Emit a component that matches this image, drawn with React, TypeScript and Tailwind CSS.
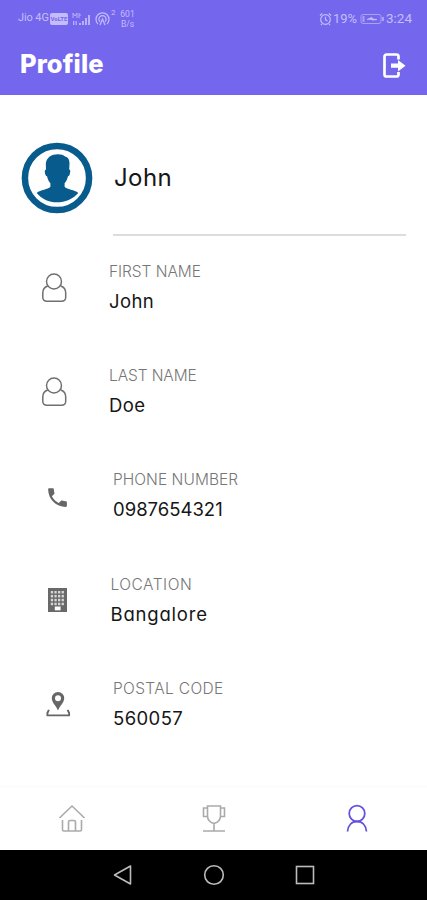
import type { ReactNode } from "react";

function PersonIcon() {
  return (
    <svg className="ml-[41px] mt-[17px] h-8 w-[27px] shrink-0" viewBox="0 0 27 32" fill="none" stroke="#707070" strokeWidth="1.5">
      <circle cx="13" cy="8.5" r="7.5" />
      <path d="M6.800 13C3.500 14 1.800 16.500 1.800 20v4.300c0 2.600 1.600 4 4.200 4h14.500c2.600 0 4.200-1.400 4.200-4V20c0-3.500-1.700-6-5-7" />
    </svg>
  );
}

function PhoneIcon() {
  return (
    <svg className="ml-[45px] mt-[21px] h-[25px] w-[25px] shrink-0" viewBox="0 0 24 24" fill="#666">
      <path d="M6.620 10.790c1.440 2.830 3.760 5.140 6.590 6.590l2.200-2.200c.27-.27.67-.36 1.020-.24 1.120.37 2.330.57 3.570.57.55 0 1 .45 1 1V20c0 .55-.45 1-1 1-9.390 0-17-7.610-17-17 0-.55.45-1 1-1h3.500c.55 0 1 .45 1 1 0 1.250.2 2.450.57 3.570.11.35.03.74-.25 1.020l-2.200 2.200z" />
    </svg>
  );
}

function BuildingIcon() {
  return (
    <svg className="ml-[47px] mt-[18px] h-[26px] w-[21px] shrink-0" viewBox="0 0 21 26">
      <path fill="#696969" d="M1 1h19v24H1z" />
      {[4, 7.9, 11.8, 15.7].map((y) => [3.800, 7.400, 11, 14.600].map((x) => (
        <rect key={`${x}-${y}`} x={x} y={y} width="2.300" height="2.500" fill="#d6d6d6" />
      )))}
      <path fill="#fff" d="M7.800 19.500h5.800V23.300H7.800z" />
    </svg>
  );
}

function PinIcon() {
  return (
    <svg className="ml-[45px] mt-[17px] h-7 w-[26px] shrink-0" viewBox="0 0 26 28">
      <path fill="#666" fillRule="evenodd" d="M13 2a6.200 6.200 0 0 0-6.200 6.200C6.800 12.500 11 15.500 13 20.500c2-5 6.200-8 6.200-12.300A6.200 6.200 0 0 0 13 2zm0 3.200a3 3 0 1 1 0 6 3 3 0 0 1 0-6z" />
      <path d="M3.900 19.800 2.400 23v2.400h21.700V23l-1.500-3.200" fill="none" stroke="#666" strokeWidth="1.900" strokeLinejoin="round" />
    </svg>
  );
}

type Field = { label: string; value: string; icon: ReactNode; pad: string; labelClass: string; valueClass: string };

const FIELDS: Field[] = [
  { label: "FIRST NAME", value: "John", icon: <PersonIcon />, pad: "pl-[41px]", labelClass: "tracking-[-0.05px]", valueClass: "tracking-[0.4px]" },
  { label: "LAST NAME", value: "Doe", icon: <PersonIcon />, pad: "pl-[41px]", labelClass: "tracking-[-0.1px]", valueClass: "tracking-[0.4px]" },
  { label: "PHONE NUMBER", value: "0987654321", icon: <PhoneIcon />, pad: "pl-[45px]", labelClass: "tracking-[0.05px]", valueClass: "tracking-[0px]" },
  { label: "LOCATION", value: "Bangalore", icon: <BuildingIcon />, pad: "pl-[42.500px]", labelClass: "tracking-[0.5px]", valueClass: "tracking-[0.8px]" },
  { label: "POSTAL CODE", value: "560057", icon: <PinIcon />, pad: "pl-[45px]", labelClass: "tracking-[0.35px]", valueClass: "tracking-[0.4px]" },
];

function StatusBar() {
  return (
    <div className="flex h-[37px] items-center whitespace-nowrap pl-[18px] pr-[15px] font-[Roboto] text-[#c5bdfb]">
      <span className="w-8 text-[11px] tracking-[-0.1px]">Jio 4G</span>
      <span className="flex h-[12px] w-[18px] items-center justify-center rounded-[2px] bg-[#c5bdfb] text-[6px] font-bold text-[#7467ee]">VoLTE</span>
      <svg className="ml-[3px] h-4 w-[21px]" viewBox="0 0 21 16" fill="#b9b0f8">
        <path d="M8 12h2v2H8zM11 10h2v4h-2zM14 7h2v7h-2zM17 4h2v10h-2zM2 10h1.300v4H2zM4.500 10h1.300v4H4.500z" />
        <path d="M2 7V2l2 3 2-3v5M8 2v5M8 4h2" fill="none" stroke="#b9b0f8" />
      </svg>
      <svg className="ml-[3px] h-4 w-[15px]" viewBox="0 0 15 16" fill="none" stroke="#c5bdfb" strokeWidth="1.200">
        <path d="M3 13a6.500 6.500 0 1 1 9 0M5 10.800a3.600 3.600 0 1 1 5 0M5 14l2.500-6 2.500 6" />
      </svg>
      <span className="mb-3 ml-px text-[8px]">2</span>
      <span className="ml-1 flex w-4 flex-col items-center text-[8.500px] leading-[10px]">
        <span>601</span>
        <span>B/s</span>
      </span>
      <svg className="ml-auto h-[14px] w-[13px]" viewBox="0 0 13 14" fill="none" stroke="#c5bdfb" strokeWidth="1.200">
        <circle cx="6.500" cy="7.500" r="4.800" />
        <path d="M6.500 4.800v3l2 1.200M1 3.500 3.200 1.500M12 3.500 9.800 1.500M3 12l-1 1M10 12l1 1" />
      </svg>
      <span className="ml-px w-[25px] text-[13px]">19%</span>
      <svg className="ml-[2px] h-3 w-[25px]" viewBox="0 0 25 12" fill="none" stroke="#aaa0f5">
        <rect x="1" y="1.500" width="20" height="9" rx="2" />
        <path d="M23 4v4M3.500 3v6" strokeWidth="2" />
        <path d="m7 6.500 5-2v1.500l5 .5-5 .5" fill="#c5bdfb" stroke="#c5bdfb" />
      </svg>
      <span className="ml-px text-[13.500px]">3:24</span>
    </div>
  );
}

function Header() {
  return (
    <header className="h-[95px] bg-[#7467ee]">
      <StatusBar />
      <div className="flex items-start justify-between pl-[20px] pr-[21px]">
        <h1 className="mt-[11px] text-[25.500px] font-extrabold leading-8 tracking-[0.1px] text-white">Profile</h1>
        <svg className="mt-[15px] h-7 w-6" viewBox="0 0 24 28" fill="none" stroke="#fff" strokeWidth="2.700">
          <path d="M16.500 7.500V4.500a2 2 0 0 0-2-2H4.500a2 2 0 0 0-2 2v18a2 2 0 0 0 2 2h10a2 2 0 0 0 2-2V20" />
          <path d="M9 11.600h7V8l7.500 5.700L16 19.500v-3.700H9z" fill="#fff" stroke="none" />
        </svg>
      </div>
    </header>
  );
}

function Avatar() {
  return (
    <svg className="mt-[47px] h-[72px] w-[72px] shrink-0" viewBox="0 0 72 72" fill="#075c8d">
      <circle cx="36" cy="36" r="32.100" fill="none" stroke="#075c8d" strokeWidth="6.500" />
      <path d="M37 12.200c-6.500 0-11.500 3-12.200 9.500l.2 6c-1.600 0-1.300 2.200-.8 4.400.4 1.500 1 2.200 1.800 2.200.8 3.500 2 5.500 3.400 7v3.500c-2.400 3-9.900 2.700-13.700 6.200C20.500 57 28 60.300 36 60.300s16.200-3.300 21.300-9.300c-3.800-3.500-11.300-3.200-13.700-6.200v-3.500c1.400-1.500 2.600-3.500 3.400-7 .8 0 1.400-.7 1.800-2.200.5-2.200 1-4.400-.6-4.400l.3-6.500c0-4.200-1.800-6-4.500-6.700-1.500-1.600-4-2.300-7-2.300z" />
    </svg>
  );
}

function FieldRow({ label, value, icon, pad, labelClass, valueClass }: Field) {
  return (
    <div className="flex h-[104.200px] items-start">
      <div className="w-[68px] shrink-0">{icon}</div>
      <div className={pad}>
        <p className={`mt-[6px] whitespace-nowrap text-[15.500px] font-light leading-5 text-[#777] ${labelClass}`}>{label}</p>
        <p className={`mt-[7px] whitespace-nowrap text-[18.500px] leading-6 text-[#161616] ${valueClass}`}>{value}</p>
      </div>
    </div>
  );
}

function TabBar() {
  return (
    <nav className="flex h-[64px] items-start border-t border-[#fafafa]">
      <div className="flex flex-1 justify-center pl-[2px] pt-[17px]">
        <svg className="h-[29px] w-7" viewBox="0 0 28 29" fill="none" stroke="#aaa" strokeWidth="1.600">
          <path d="M1.500 14 14 2l12.500 12M4.500 16v9.500c0 1 .5 1.500 1.500 1.500h16c1 0 1.500-.5 1.500-1.500V16M10.500 27v-9c0-1 .5-1.500 1.500-1.500h4c1 0 1.500.5 1.500 1.500v9" />
        </svg>
      </div>
      <div className="flex flex-1 justify-center pl-[2px] pt-[17px]">
        <svg className="h-[29px] w-6" viewBox="0 0 24 29" fill="none" stroke="#aaa" strokeWidth="1.600">
          <path d="M5.500 2h13v10c0 4-3 6.500-6.500 7.500-3.500-1-6.500-3.500-6.500-7.500zM5.500 4h-4v8.500h4M18.500 4h4v8.500h-4M12 19.500V27M1 27h22" />
        </svg>
      </div>
      <div className="flex flex-1 justify-center pl-[3px] pt-[17px]">
        <svg className="h-[29px] w-6" viewBox="0 0 24 29" fill="none" stroke="#6252df" strokeWidth="1.800">
          <circle cx="12" cy="9.500" r="7.800" />
          <path d="M2.500 27.500C3 21.500 6.500 17.500 12 17.500s9 4 9.500 10" />
        </svg>
      </div>
    </nav>
  );
}

function SystemNav() {
  return (
    <div className="flex h-[50px] items-center bg-black pl-[112px]">
      <svg className="h-[22px] w-[22px]" viewBox="0 0 22 22" fill="none" stroke="#bcbcbc" strokeWidth="1.600" strokeLinejoin="round">
        <path d="M18.500 2v18L2.500 11z" />
      </svg>
      <svg className="ml-[69px] h-[22px] w-[22px]" viewBox="0 0 22 22" fill="none" stroke="#bcbcbc" strokeWidth="1.600">
        <circle cx="11" cy="11" r="9.300" />
      </svg>
      <svg className="ml-[69px] h-[22px] w-[22px]" viewBox="0 0 22 22" fill="none" stroke="#bcbcbc" strokeWidth="1.600">
        <rect x="2.500" y="2.500" width="17" height="17" />
      </svg>
    </div>
  );
}

export default function App() {
  return (
    <div className="flex h-[900px] w-[427px] flex-col overflow-hidden bg-white font-[Inter,sans-serif] [font-feature-settings:'cv11']">
      <Header />
      <main className="flex-1">
        <section className="flex h-[161px] items-start pl-[21px]">
          <Avatar />
          <div className="ml-5 mt-[66px] h-[75px] w-[293px] border-b-2 border-[#dcdcdc]">
            <p className="pl-[1px] pt-px text-[24px] leading-8 tracking-[0.4px] text-[#161616]">John</p>
          </div>
        </section>
        {FIELDS.map((f) => (
          <FieldRow key={f.label} {...f} />
        ))}
      </main>
      <TabBar />
      <SystemNav />
    </div>
  );
}
